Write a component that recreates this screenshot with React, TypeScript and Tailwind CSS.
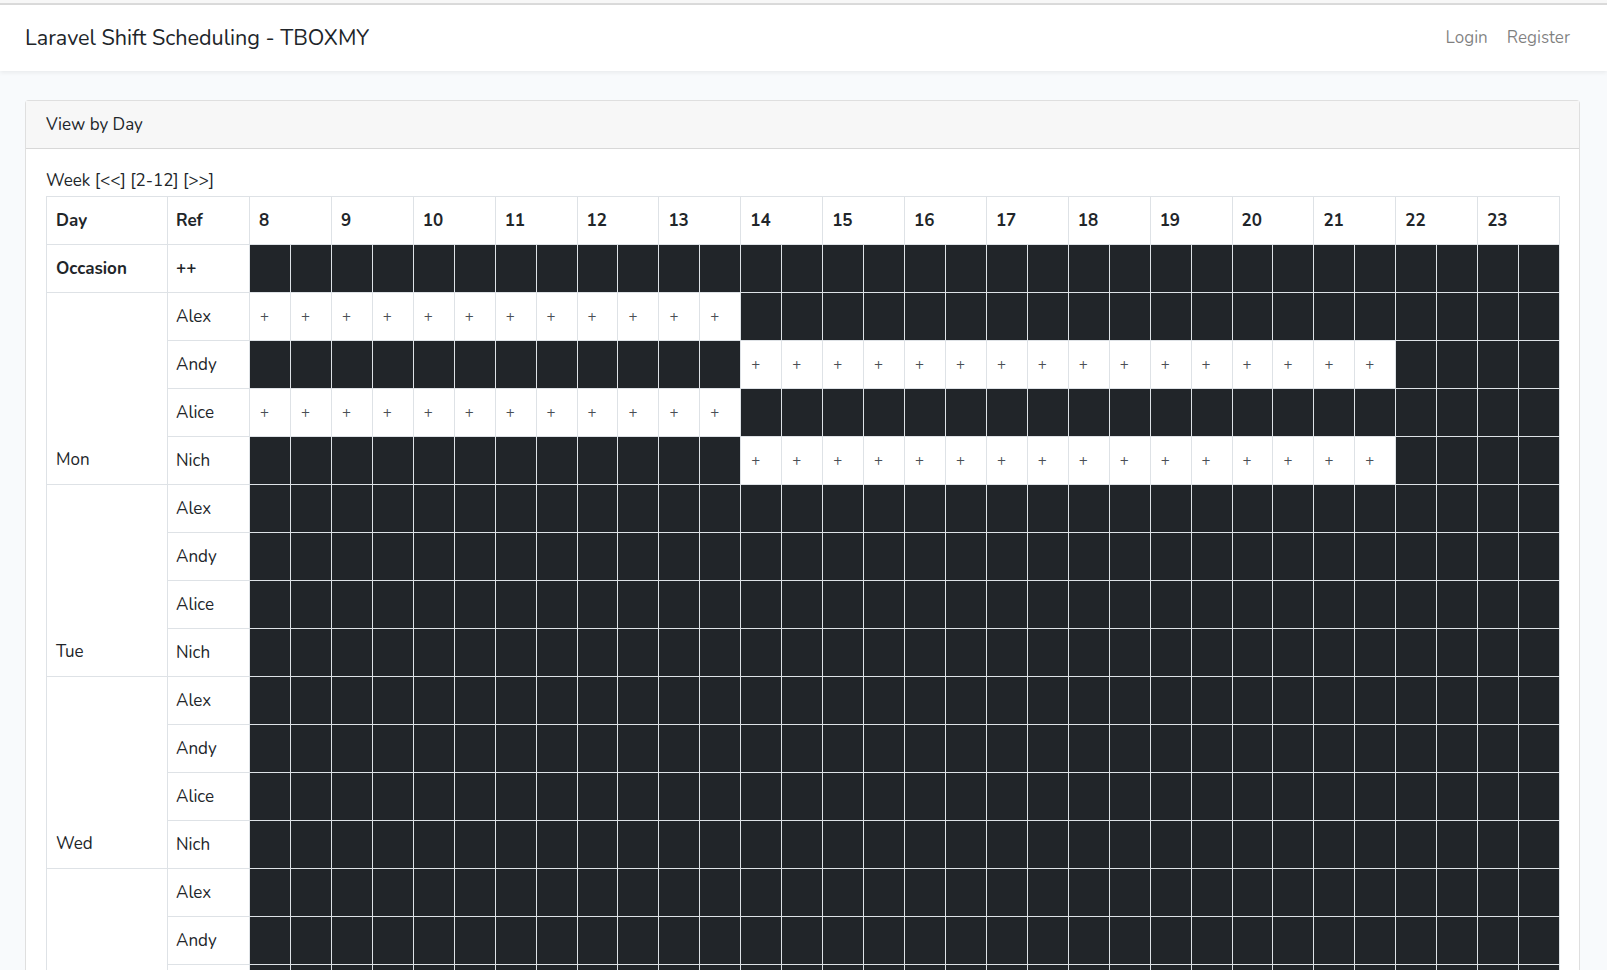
import React from "react";

const hours = Array.from({ length: 16 }, (_, i) => i + 8);
const days = ["Mon", "Tue", "Wed", "Thu", "Fri", "Sat", "Sun"];
const people = ["Alex", "Andy", "Alice", "Nich"];

function openCells(day: string, person: string): [number, number] | null {
  if (day !== "Mon") return null;
  if (person === "Alex" || person === "Alice") return [0, 12];
  return [12, 28];
}

const font = { fontFamily: '"Nunito", "Open Sans", "Noto Sans", sans-serif' };

export default function App() {
  return (
    <div className="h-[970px] overflow-hidden bg-[#f8fafc] text-[17px] text-[#212529]" style={font}>
      <div className="h-[3px] bg-[#f7f7f7]" />
      <div className="h-[2px] bg-[#dadada]" />
      <nav className="flex h-[66px] items-center justify-between bg-white pl-[25px] pr-[29px] shadow-[0_2px_4px_rgba(0,0,0,0.06)]">
        <div className="text-[21.6px] leading-[30px] text-[#212529]">Laravel Shift Scheduling - TBOXMY</div>
        <div className="flex gap-[3px] text-[rgba(0,0,0,0.5)]">
          <span className="px-2">Login</span>
          <span className="px-2">Register</span>
        </div>
      </nav>
      <div className="ml-[25px] mt-[29px] w-[1555px] rounded-[4px] border border-[rgba(0,0,0,0.125)] bg-white">
        <div className="h-[48px] border-b border-[rgba(0,0,0,0.125)] bg-[#f7f7f7] px-5 leading-[47px]">View by Day</div>
        <div className="px-5 pt-5">
          <div className="mb-[3px] leading-[24px]">Week [&lt;&lt;] [2-12] [&gt;&gt;]</div>
          <table className="w-[1514px] table-fixed border-collapse leading-[24px]">
            <colgroup>
              <col className="w-[121px]" />
              <col className="w-[82px]" />
              {Array.from({ length: 32 }, (_, i) => (
                <col key={i} />
              ))}
            </colgroup>
            <tbody>
              <tr className="h-[48px]">
                <th className="border border-[#dee2e6] px-[9px] text-left font-bold">Day</th>
                <th className="border border-[#dee2e6] px-[8px] text-left font-bold">Ref</th>
                {hours.map((h) => (
                  <th key={h} colSpan={2} className="border border-[#dee2e6] px-[9px] text-left font-bold">
                    {h}
                  </th>
                ))}
              </tr>
              <tr className="h-[48px]">
                <td className="border border-[#dee2e6] px-[9px] font-bold">Occasion</td>
                <td className="border border-[#dee2e6] px-[8px] font-bold">++</td>
                {Array.from({ length: 32 }, (_, i) => (
                  <td key={i} className="border border-[#dee2e6] bg-[#212529]" />
                ))}
              </tr>
              {days.map((d) =>
                people.map((p, pi) => {
                  const open = openCells(d, p);
                  return (
                    <tr key={d + p} className="h-[48px]">
                      {pi === 0 && (
                        <td rowSpan={4} className="border border-[#dee2e6] px-[9px] pb-[12px] align-bottom">
                          {d}
                        </td>
                      )}
                      <td className="border border-[#dee2e6] px-[8px]">{p}</td>
                      {Array.from({ length: 32 }, (_, i) => {
                        const isOpen = open && i >= open[0] && i < open[1];
                        return isOpen ? (
                          <td key={i} className="border border-[#dee2e6] bg-white pl-[10px] text-[15px] text-[#4a4f55]">
                            +
                          </td>
                        ) : (
                          <td key={i} className="border border-[#dee2e6] bg-[#212529]" />
                        );
                      })}
                    </tr>
                  );
                })
              )}
            </tbody>
          </table>
        </div>
      </div>
    </div>
  );
}
